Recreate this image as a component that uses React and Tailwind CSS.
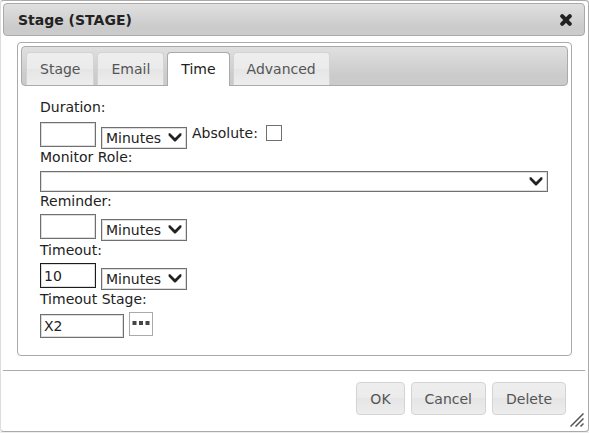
import { useState } from "react";

const tabs = ["Stage", "Email", "Time", "Advanced"];

const glass =
  "border border-[#d3d3d3] bg-linear-[180deg,#eeeeee_0%,#ebebeb_50%,#e5e5e5_50%,#ededed_100%] text-[#555555]";
const bar =
  "border border-[#aaaaaa] bg-linear-[180deg,#e0e0e0_0%,#cbcbcb_75%,#cbcbcb_100%]";
const field =
  "rounded-none border border-[#707070] bg-white shadow-[inset_0_0_0_1px_#dddddd] outline-none";

function Chevron() {
  return (
    <svg
      className="pointer-events-none absolute top-1.5 right-[5px]"
      width="14"
      height="9"
      viewBox="0 0 14 9"
      aria-hidden="true"
    >
      <path
        d="M0.6 0.3L2.2 0.3L7 5L11.8 0.3L13.4 0.3V2.6L7.6 8.4H6.4L0.6 2.6Z"
        fill="#222222"
      />
    </svg>
  );
}

function UnitSelect({ label }) {
  return (
    <span className="relative mt-[5px] block w-[86px]">
      <select
        aria-label={label}
        className={`${field} block h-[22px] w-full appearance-none pl-1`}
      >
        <option>Minutes</option>
        <option>Hours</option>
        <option>Days</option>
      </select>
      <Chevron />
    </span>
  );
}

function DurationRow({ id, label, value, active }) {
  return (
    <div className="flex items-start gap-[5px]">
      <input
        id={id}
        type="text"
        defaultValue={value}
        className={
          active
            ? "h-[25px] w-14 rounded-none border border-[#1c1c1c] bg-white px-[3px] shadow-[inset_0_0_0_1px_#dddddd] outline-none"
            : `${field} h-[25px] w-14 px-[3px]`
        }
      />
      <UnitSelect label={`${label} unit`} />
    </div>
  );
}

export default function App() {
  const [current, setCurrent] = useState("Time");

  return (
    <div className="bg-[#eeeeee] pb-px font-['DejaVu_Sans',Verdana,sans-serif] text-[14px] leading-4 text-[#222222]">
      <div
        role="dialog"
        aria-labelledby="dialog-title"
        className="relative rounded-[4px] border border-[#aaaaaa] border-l-[#dddddd] bg-white p-0.5 pr-[3px]"
      >
        <header
          className={`${bar} flex h-[33px] items-center justify-between rounded-[4px] pr-3 pl-3.5`}
        >
          <h1 id="dialog-title" className="font-bold">
            Stage (STAGE)
          </h1>
          <button type="button" aria-label="Close" className="block">
            <svg width="12" height="12" viewBox="0 0 12 12">
              <path
                d="M2.2 2.2L9.8 9.8M9.8 2.2L2.2 9.8"
                stroke="#222222"
                strokeWidth="4"
                strokeLinecap="round"
              />
            </svg>
          </button>
        </header>

        <main className="mt-1.5 mr-[13px] ml-3.5 rounded-[4px] border border-[#aaaaaa] p-[3px] pb-[17px]">
          <div
            role="tablist"
            className={`${bar} flex h-10 items-end gap-[3px] rounded-[4px] pl-1`}
          >
            {tabs.map((name) => (
              <button
                key={name}
                type="button"
                role="tab"
                aria-selected={name === current}
                onClick={() => setCurrent(name)}
                className={
                  name === current
                    ? "-mb-px h-[34px] rounded-t-[4px] border border-b-0 border-[#aaaaaa] bg-white px-[13px] pb-px text-[#212121]"
                    : `${glass} h-[33px] rounded-t-[4px] border-b-0 px-[13px]`
                }
              >
                {name}
              </button>
            ))}
          </div>

          <form className="pt-[13px] pr-5 pl-[19px]">
            <label htmlFor="duration" className="mb-[7px] block">
              Duration:
            </label>
            <div className="flex items-start gap-[5px]">
              <DurationRow id="duration" label="Duration" value="" />
              <label className="mt-[3px] flex items-center gap-2">
                Absolute:
                <input
                  type="checkbox"
                  className="size-4 appearance-none border border-[#707070] bg-white checked:bg-[#707070]"
                />
              </label>
            </div>

            <label htmlFor="monitor" className="mb-1.5 block">
              Monitor Role:
            </label>
            <div className="relative mb-px">
              <select
                id="monitor"
                className={`${field} block h-[21px] w-full appearance-none pl-1`}
              >
                <option></option>
              </select>
              <Chevron />
            </div>

            <label htmlFor="reminder" className="mb-[5px] block">
              Reminder:
            </label>
            <DurationRow id="reminder" label="Reminder" value="" />

            <label htmlFor="timeout" className="mt-px mb-[5px] block">
              Timeout:
            </label>
            <DurationRow id="timeout" label="Timeout" value="10" active />

            <label htmlFor="timeout-stage" className="mt-px mb-[5px] block">
              Timeout Stage:
            </label>
            <div className="flex items-start gap-[5px]">
              <input
                id="timeout-stage"
                type="text"
                defaultValue="X2"
                className={`${field} mt-0.5 h-6 w-[84px] px-[3px]`}
              />
              <button
                type="button"
                aria-label="Choose stage"
                className="flex size-6 justify-center border border-[#aaaaaa] bg-white pt-2"
              >
                <svg width="18" height="4" viewBox="0 0 18 4">
                  <path
                    d="M0.5 0H4.5V4H0.5ZM7 0H11V4H7ZM13.5 0H17.5V4H13.5Z"
                    fill="#454545"
                  />
                </svg>
              </button>
            </div>
          </form>
        </main>

        <footer className="mt-3.5 flex justify-end gap-1.5 border-t border-[#aaaaaa] pt-[11px] pr-[19px] pb-3.5">
          {["OK", "Cancel", "Delete"].map((name) => (
            <button
              key={name}
              type="button"
              className={`${glass} h-[33px] rounded-[4px] px-[13px]`}
            >
              {name}
            </button>
          ))}
        </footer>

        <svg
          className="absolute right-1 bottom-1 cursor-se-resize"
          width="14"
          height="14"
          viewBox="0 0 14 14"
          aria-hidden="true"
        >
          <path
            d="M0.5 13.5L13.5 0.5M5.5 13.5L13.5 5.5M10.5 13.5L13.5 10.5"
            stroke="#555555"
            strokeWidth="1.5"
          />
        </svg>
      </div>
    </div>
  );
}
